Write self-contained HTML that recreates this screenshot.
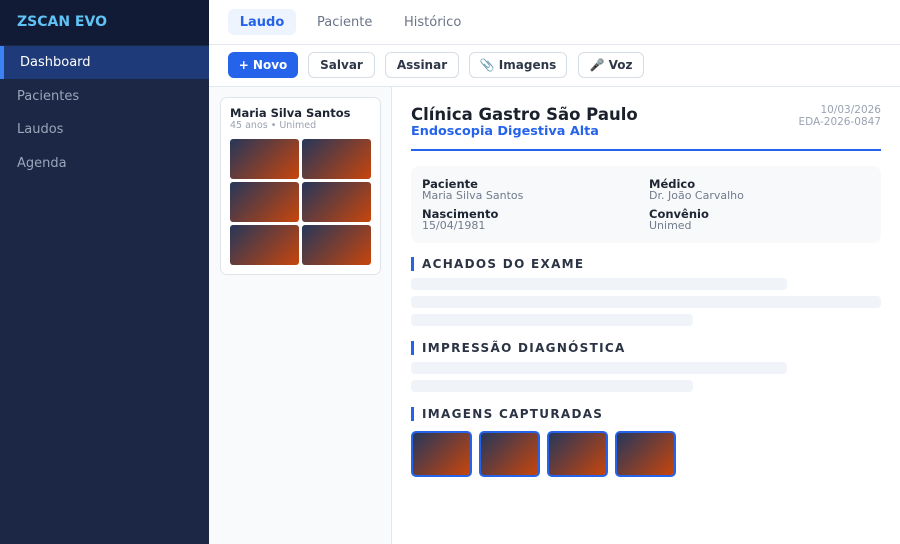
<!DOCTYPE html><html><head><meta charset="utf-8"><style>
*{box-sizing:border-box;margin:0;padding:0}
body{width:900px;height:544px;overflow:hidden;font-family:"DejaVu Sans","Liberation Sans",sans-serif;background:#fff;position:relative}
.a{position:absolute}
.sb{left:0;top:0;width:209px;height:544px;background:#1b2744}
.sbh{left:0;top:0;width:209px;height:45px;background:#111b35;color:#5fc3f5;font-weight:bold;font-size:14px;padding:14px 17px}
.nav{left:0;width:209px;height:33px;font-size:13px;color:#9aa6ba;padding:9px 17px}
.act{background:#1f3a78;border-left:4px solid #3b82f6;color:#fff;padding-left:16px}
.tab{top:9px;height:26px;font-size:13px;color:#6b7588;padding:6px 13px}
.btn{top:52px;height:26px;border:1px solid #d7dde6;border-radius:6px;font-size:12px;font-weight:bold;color:#2d3748;text-align:center;padding-top:5px;background:#fff}
.g{background:linear-gradient(135deg,#26375a,#c7450c);border-radius:3px}
.lbl{font-size:11.5px;font-weight:bold;color:#1e2533}
.val{font-size:11px;color:#717b8c}
.sec{font-size:12px;font-weight:bold;letter-spacing:1.3px;color:#2b3344;border-left:3px solid #2563eb;padding-left:8px;height:14px;line-height:14px}
.bar{height:12px;background:#f0f3f7;border-radius:4px;left:411px}
.im{top:431px;width:61px;height:46px;border:2px solid #2563eb;border-radius:5px}
</style></head><body>
<div class="a sb"></div>
<div class="a sbh">ZSCAN EVO</div>
<div class="a nav act" style="top:46px">Dashboard</div>
<div class="a nav" style="top:80px">Pacientes</div>
<div class="a nav" style="top:113px">Laudos</div>
<div class="a nav" style="top:147px">Agenda</div>

<div class="a" style="left:209px;top:44px;width:691px;height:1px;background:#e3e8ef"></div>
<div class="a tab" style="left:228px;width:68px;text-align:center;padding-left:0;padding-right:0;background:#eef4fe;color:#2563eb;font-weight:bold;border-radius:6px">Laudo</div>
<div class="a tab" style="left:304px">Paciente</div>
<div class="a tab" style="left:391px">Histórico</div>

<div class="a btn" style="left:228px;width:70px;background:#2563eb;border-color:#2563eb;color:#fff">+ Novo</div>
<div class="a btn" style="left:308px;width:67px">Salvar</div>
<div class="a btn" style="left:385px;width:74px">Assinar</div>
<div class="a btn" style="left:469px;width:98px">📎 Imagens</div>
<div class="a btn" style="left:578px;width:66px">🎤 Voz</div>
<div class="a" style="left:209px;top:86px;width:691px;height:1px;background:#e3e8ef"></div>

<div class="a" style="left:209px;top:87px;width:183px;height:457px;background:#f8fafc;border-right:1px solid #e3e8ef"></div>
<div class="a" style="left:220px;top:97px;width:161px;height:178px;background:#fff;border:1px solid #dfe4eb;border-radius:7px"></div>
<div class="a" style="left:230px;top:106px;font-size:11.5px;font-weight:bold;color:#1e2533">Maria Silva Santos</div>
<div class="a" style="left:230px;top:120px;font-size:9.5px;color:#9aa3b2">45 anos • Unimed</div>
<div class="a g" style="left:230px;top:139px;width:69px;height:40px"></div>
<div class="a g" style="left:302px;top:139px;width:69px;height:40px"></div>
<div class="a g" style="left:230px;top:182px;width:69px;height:40px"></div>
<div class="a g" style="left:302px;top:182px;width:69px;height:40px"></div>
<div class="a g" style="left:230px;top:225px;width:69px;height:40px"></div>
<div class="a g" style="left:302px;top:225px;width:69px;height:40px"></div>

<div class="a" style="left:411px;top:105px;font-size:16.5px;font-weight:bold;color:#1a202c">Clínica Gastro São Paulo</div>
<div class="a" style="left:411px;top:124px;font-size:12.8px;font-weight:bold;color:#2563eb">Endoscopia Digestiva Alta</div>
<div class="a" style="left:700px;top:104px;width:181px;text-align:right;font-size:10.5px;color:#9aa3b2;line-height:12px">10/03/2026<br>EDA-2026-0847</div>
<div class="a" style="left:411px;top:149px;width:470px;height:2px;background:#2563eb"></div>

<div class="a" style="left:411px;top:166px;width:470px;height:77px;background:#f7f9fb;border-radius:8px"></div>
<div class="a lbl" style="left:422px;top:177px">Paciente</div>
<div class="a val" style="left:422px;top:189px">Maria Silva Santos</div>
<div class="a lbl" style="left:422px;top:207px">Nascimento</div>
<div class="a val" style="left:422px;top:219px">15/04/1981</div>
<div class="a lbl" style="left:649px;top:177px">Médico</div>
<div class="a val" style="left:649px;top:189px">Dr. João Carvalho</div>
<div class="a lbl" style="left:649px;top:207px">Convênio</div>
<div class="a val" style="left:649px;top:219px">Unimed</div>

<div class="a sec" style="left:411px;top:257px">ACHADOS DO EXAME</div>
<div class="a bar" style="top:278px;width:376px"></div>
<div class="a bar" style="top:296px;width:470px"></div>
<div class="a bar" style="top:314px;width:282px"></div>
<div class="a sec" style="left:411px;top:341px">IMPRESSÃO DIAGNÓSTICA</div>
<div class="a bar" style="top:362px;width:376px"></div>
<div class="a bar" style="top:380px;width:282px"></div>
<div class="a sec" style="left:411px;top:407px">IMAGENS CAPTURADAS</div>
<div class="a im g" style="left:411px"></div>
<div class="a im g" style="left:479px"></div>
<div class="a im g" style="left:547px"></div>
<div class="a im g" style="left:615px"></div>
</body></html>
